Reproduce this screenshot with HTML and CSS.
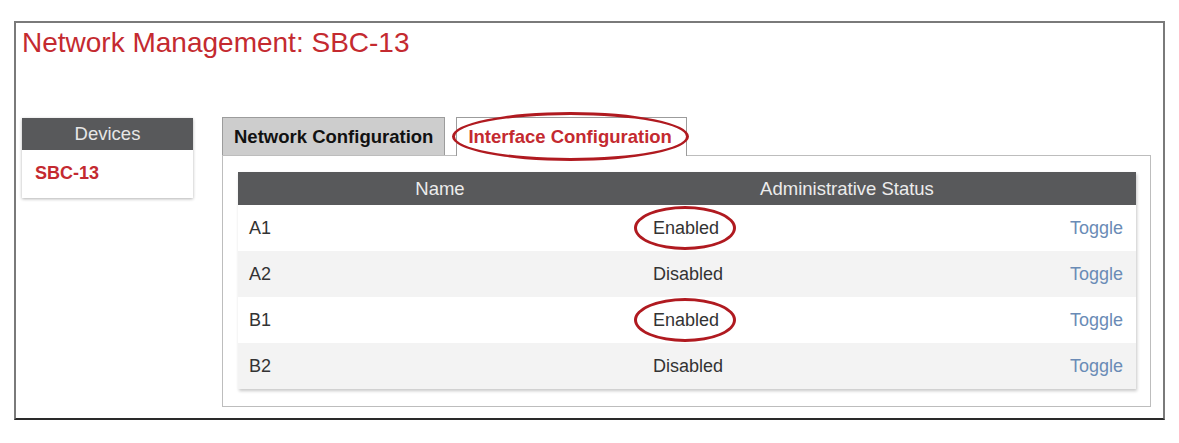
FILE: index.html
```html
<!DOCTYPE html>
<html lang="en">
<head>
    <meta charset="UTF-8">
    <title>Network Management: SBC-13</title>
    <link rel="stylesheet" href="styles.css">
</head>
<body>
    <div class="frame">
        <h1 class="page-title">Network Management: SBC-13</h1>

        <div class="content">
            <!-- Device list -->
            <div class="sidebar">
                <div class="sidebar-head">Devices</div>
                <div class="sidebar-item">SBC-13</div>
            </div>

            <div class="main">
                <div class="tabs">
                    <div class="tab">Network Configuration</div>
                    <div class="tab active circled-tab">Interface Configuration</div>
                </div>

                <div class="panel">
                    <div class="grid">
                        <div class="grid-head">
                            <div class="col-name">Name</div>
                            <div class="col-status">Administrative Status</div>
                            <div></div>
                        </div>
                        <div class="grid-row">
                            <div class="cell">A1</div>
                            <div class="cell"><span class="circled">Enabled</span></div>
                            <div class="cell toggle">Toggle</div>
                        </div>
                        <div class="grid-row alt">
                            <div class="cell">A2</div>
                            <div class="cell">Disabled</div>
                            <div class="cell toggle">Toggle</div>
                        </div>
                        <div class="grid-row">
                            <div class="cell">B1</div>
                            <div class="cell"><span class="circled">Enabled</span></div>
                            <div class="cell toggle">Toggle</div>
                        </div>
                        <div class="grid-row alt">
                            <div class="cell">B2</div>
                            <div class="cell">Disabled</div>
                            <div class="cell toggle">Toggle</div>
                        </div>
                    </div>
                </div>
            </div>
        </div>
    </div>
</body>
</html>
```

FILE: styles.css
```css
body {
    margin: 0;
    padding: 0;
    background-color: #fff;
    font-family: "Liberation Sans", Arial, sans-serif;
    color: #333;
}

.frame {
    margin: 21px 14px 0 14px;
    border: 2px solid #7a7a7a;
    border-bottom-color: #2a2a2a;
    padding: 6px 12px 11px 6px;
}

.page-title {
    margin: 0;
    font-size: 28px;
    line-height: 28px;
    font-weight: normal;
    color: #c42a30;
}

.content {
    display: flex;
    align-items: flex-start;
    gap: 29px;
    margin-top: 60px;
}

/* Sidebar */
.sidebar {
    width: 171px;
    margin-top: 1px;
    background-color: #fff;
    box-shadow: 0 1px 3px rgba(0, 0, 0, 0.3);
}

.sidebar-head {
    height: 32px;
    line-height: 32px;
    background-color: #58595b;
    color: #e6e6e6;
    text-align: center;
    font-size: 18.5px;
}

.sidebar-item {
    height: 48px;
    line-height: 46px;
    padding-left: 13px;
    color: #c42a30;
    font-size: 18px;
    font-weight: bold;
}

/* Tabs */
.main {
    width: 929px;
}

.tabs {
    display: flex;
    gap: 11px;
}

.tab {
    position: relative;
    height: 37px;
    line-height: 37px;
    padding: 0 11px;
    border: 1px solid #9c9c9c;
    border-bottom: none;
    background-color: #cdcdcd;
    color: #111;
    font-size: 18.5px;
    font-weight: bold;
}

.tab.active {
    width: 207px;
    background-color: #fff;
    color: #c42a30;
    height: 38px;
    margin-bottom: -1px;
    z-index: 1;
}

.circled-tab::after {
    content: "";
    position: absolute;
    left: -5px;
    right: -3px;
    top: -6px;
    bottom: -5px;
    border: 3.5px solid #b01a20;
    border-radius: 50%;
}

/* Panel and table */
.panel {
    border: 1px solid #bdbdbd;
    padding: 16px 14px 17px 15px;
}

.grid {
    box-shadow: 1px 2px 3px rgba(0, 0, 0, 0.22);
}

.grid-head, .grid-row {
    display: grid;
    grid-template-columns: 404px 410px 1fr;
}

.grid-head {
    height: 33px;
    line-height: 33px;
    background-color: #58595b;
    color: #ececec;
    font-size: 18.5px;
    text-align: center;
}

.grid-row {
    height: 46px;
    background-color: #fff;
    font-size: 18px;
    color: #333;
}

.grid-row.alt {
    background-color: #f3f3f3;
}

.cell {
    display: flex;
    align-items: center;
    padding-left: 11px;
}

.toggle {
    justify-content: flex-end;
    padding-left: 0;
    padding-right: 13px;
    color: #6a8bb6;
}

.circled {
    position: relative;
    display: inline-block;
    line-height: 22px;
}

.circled::after {
    content: "";
    position: absolute;
    left: -19px;
    right: -17px;
    top: -11px;
    bottom: -11px;
    border: 3.5px solid #b01a20;
    border-radius: 50%;
}
```
